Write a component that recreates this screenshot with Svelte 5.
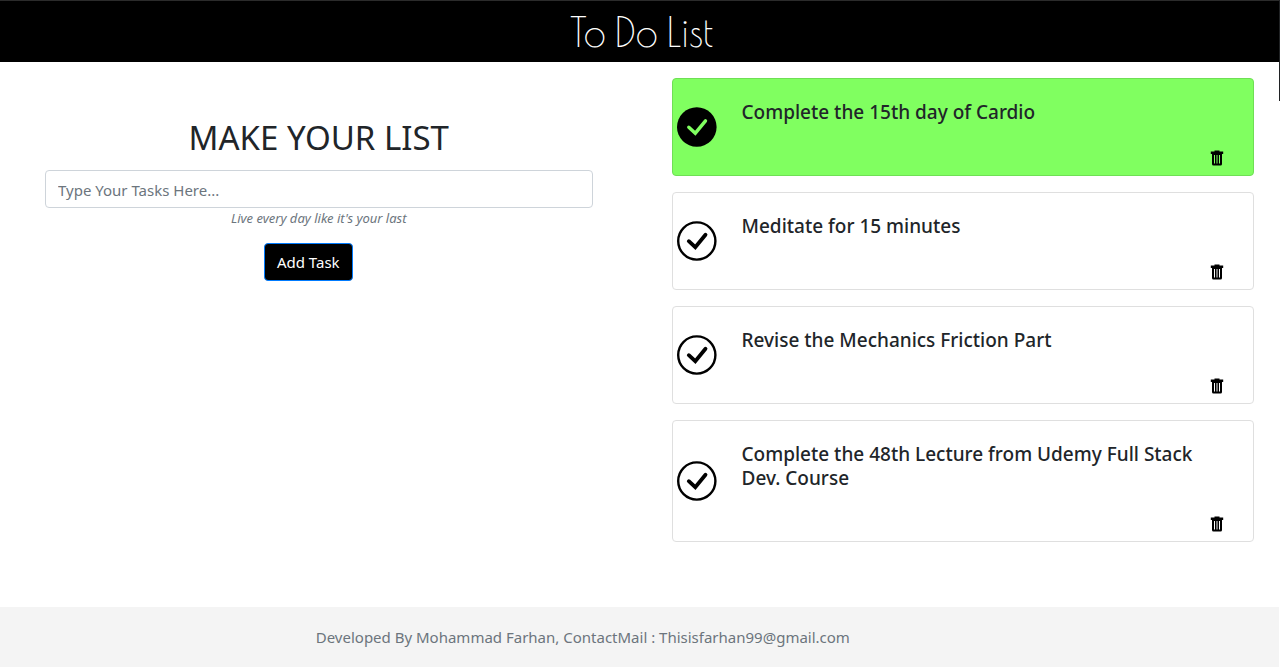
<script>
  let draft = $state('');
  let nextId = 5;
  let tasks = $state([
    { id: 1, text: 'Complete the 15th day of Cardio', done: true },
    { id: 2, text: 'Meditate for 15 minutes', done: false },
    { id: 3, text: 'Revise the Mechanics Friction Part', done: false },
    { id: 4, text: 'Complete the 48th Lecture from Udemy Full Stack Dev. Course', done: false }
  ]);

  function add(event) {
    event.preventDefault();
    const text = draft.trim();
    if (!text) return;
    tasks.push({ id: nextId++, text, done: false });
    draft = '';
  }

  function remove(id) {
    tasks = tasks.filter((task) => task.id !== id);
  }
</script>

<div class="page">
  <header><h1>To Do List</h1></header>
  <div class="edge"></div>

  <main>
    <form onsubmit={add}>
      <h2><label for="task">MAKE YOUR LIST</label></h2>
      <input id="task" type="text" placeholder="Type Your Tasks Here..." bind:value={draft} />
      <small>Live every day like it's your last</small>
      <button class="add" type="submit">Add Task</button>
    </form>

    <ul>
      {#each tasks as task (task.id)}
        <li class:done={task.done}>
          <button class="check" type="button" aria-label="Toggle done" aria-pressed={task.done} onclick={() => (task.done = !task.done)}>
            <svg viewBox="0 0 40 40" width="40" height="40">
              {#if task.done}
                <circle cx="19.8" cy="20" r="19.8" />
              {:else}
                <circle class="ring" cx="19.8" cy="20" r="18.6" />
              {/if}
              <path class="tick" d="M11.8 20.2 18.3 26.2 28.5 13.8" />
            </svg>
          </button>
          <div class="body">
            <h3>{task.text}</h3>
            <button class="trash" type="button" aria-label="Delete task" onclick={() => remove(task.id)}>
              <svg viewBox="0 0 14 16" width="14" height="16">
                <path d="M4.5 0.5h5v1H13.2v2.5H12V14a1.5 1.5 0 0 1-1.5 1.5h-7A1.5 1.5 0 0 1 2 14V4H0.8V1.5H4.5z" />
                <path class="slot" d="M4.5 5v8.5M9.5 5v8.5" />
                <path class="shade" d="M7 5v8.5" />
              </svg>
            </button>
          </div>
        </li>
      {/each}
    </ul>
  </main>

  <footer>Developed By Mohammad Farhan, ContactMail : Thisisfarhan99@gmail.com</footer>
</div>

<style>
  :global(body) {
    margin: 0;
    background: #fff;
  }
  .page {
    position: relative;
    display: flex;
    flex-direction: column;
    box-sizing: border-box;
    min-height: 100vh;
    padding: 0 1px 1px 0;
    color: #212529;
    font: 16px/24px "Noto Sans", "Open Sans", sans-serif;
  }
  .edge {
    position: absolute;
    top: 0;
    right: 0;
    width: 1px;
    height: 101px;
    background: #202224;
  }
  header {
    padding-top: 2px;
    border-top: 1px solid #2b2b2b;
    background: #000;
    color: #fff;
    text-align: center;
  }
  h1 {
    margin: 0;
    padding-left: 4px;
    font: 400 40px/59px "Poiret One", Lato, sans-serif;
  }
  main {
    flex: 1;
    display: grid;
    grid-template-columns: 1fr 1fr;
    align-items: start;
  }
  form {
    display: flex;
    flex-direction: column;
    padding: 54px 47px 0 45px;
  }
  h2 {
    margin: 0 0 10px;
    font-size: 33px;
    line-height: 44px;
    font-weight: 400;
    text-align: center;
  }
  input {
    box-sizing: border-box;
    width: 100%;
    height: 38px;
    padding: 8px 12px 6px;
    border: 1px solid #ced4da;
    border-radius: 4px;
    font: inherit;
    font-size: 15px;
    color: #495057;
  }
  input::placeholder {
    color: #6c757d;
    opacity: 1;
  }
  small {
    font-size: 13px;
    line-height: 20px;
    font-style: italic;
    color: #6c757d;
    text-align: center;
  }
  .add {
    align-self: center;
    height: 38px;
    margin: 15px 21px 0 0;
    padding: 0 12px;
    border: 1px solid #007bff;
    border-radius: 4px;
    background: #000;
    color: #fff;
    font: inherit;
    font-size: 15px;
  }
  ul {
    display: flex;
    flex-direction: column;
    gap: 16px;
    margin: 0;
    padding: 16px 25px 16px 32px;
    list-style: none;
  }
  li {
    display: flex;
    align-items: center;
    border: 1px solid #dfdfdf;
    border-radius: 4px;
    background: #fff;
  }
  .done {
    border-color: #6fdf55;
    background: #80ff60;
  }
  .check,
  .trash {
    flex: none;
    padding: 0;
    border: 0;
    background: none;
    cursor: pointer;
  }
  .check {
    margin-left: 4px;
  }
  svg {
    display: block;
  }
  .ring {
    fill: none;
    stroke: #000;
    stroke-width: 2.4;
  }
  .tick {
    fill: none;
    stroke: #000;
    stroke-width: 3.8;
    stroke-linecap: round;
  }
  .done .tick {
    stroke: #80ff60;
    stroke-width: 3.4;
  }
  .body {
    flex: 1;
    display: flex;
    flex-direction: column;
    padding: 21px 29px 9px 25px;
  }
  h3 {
    margin: 0 0 26px;
    font-size: 19px;
    line-height: 24px;
    font-weight: 500;
  }
  .trash {
    align-self: flex-end;
  }
  .slot {
    stroke: #fff;
  }
  .done .slot {
    stroke: #80ff60;
  }
  .shade {
    stroke: #777;
    stroke-width: 2;
  }
  .done .shade {
    stroke: #3e7c2f;
  }
  footer {
    padding: 18px 16px 18px calc(25% - 4px);
    background: #f4f4f4;
    color: #6c757d;
    font-size: 15px;
  }
</style>
